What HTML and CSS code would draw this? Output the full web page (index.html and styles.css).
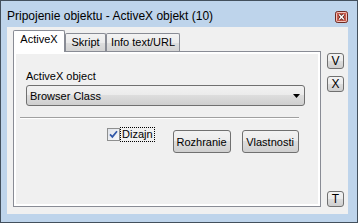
FILE: index.html
```html
<!DOCTYPE html>
<html>
<head>
<meta charset="utf-8">
<link rel="stylesheet" href="styles.css">
</head>
<body>
<div class="window">
  <div class="titlebar">
    <span class="title">Pripojenie objektu - ActiveX objekt (10)</span>
    <span class="close">
      <svg width="13" height="12" viewBox="0 0 13 12">
        <rect x="0.5" y="0.5" width="12" height="11" rx="2" fill="#c95a4c" stroke="#6d2b23"/>
        <rect x="1.5" y="1.5" width="10" height="9" rx="1" fill="none" stroke="#f2c4bc"/>
        <path d="M4.2 3.5 L8.8 8.5 M8.8 3.5 L4.2 8.5" stroke="#4a1d17" stroke-width="2.8"/>
        <path d="M4.2 3.5 L8.8 8.5 M8.8 3.5 L4.2 8.5" stroke="#ffffff" stroke-width="1.4"/>
      </svg>
    </span>
  </div>
  <div class="client">
    <div class="main">
      <div class="tabs">
        <div class="tab active">ActiveX</div>
        <div class="tab inactive t-skript">Skript</div>
        <div class="tab inactive t-info">Info text/URL</div>
      </div>
      <div class="panel">
        <div class="label">ActiveX object</div>
        <div class="combo">
          <span>Browser Class</span>
          <svg width="7" height="4" viewBox="0 0 7 4"><polygon points="0,0 7,0 3.5,4" fill="#000"/></svg>
        </div>
        <div class="sep"></div>
        <div class="row">
          <span class="check">
            <svg width="13" height="13" viewBox="0 0 13 13">
              <defs><linearGradient id="cg" x1="0" y1="0" x2="1" y2="1"><stop offset="0" stop-color="#dfe3ea"/><stop offset="1" stop-color="#f8f9fb"/></linearGradient></defs>
              <rect x="0.5" y="0.5" width="12" height="12" fill="url(#cg)" stroke="#8e8f8f"/>
              <path d="M3 6.3 L5.4 8.9 L10 3.3" fill="none" stroke="#3057a8" stroke-width="1.7"/>
            </svg>
          </span>
          <span class="cblabel">Dizajn</span>
          <span class="btn b-rozh">Rozhranie</span>
          <span class="btn b-vlast">Vlastnosti</span>
        </div>
      </div>
    </div>
    <div class="side">
      <span class="sbtn">V</span>
      <span class="sbtn s-x">X</span>
      <span class="sbtn s-t">T</span>
    </div>
  </div>
</div>
</body>
</html>
```
FILE: styles.css
```css
html, body {
  margin: 0;
  padding: 0;
}
body {
  font-family: "Liberation Sans", Arial, sans-serif;
  font-size: 11px;
  color: #000;
}
.window {
  width: 358px;
  height: 223px;
  box-sizing: border-box;
  border: 1px solid #43505d;
  background: #bed4eb;
  padding: 0 9px 8px 6px;
  display: flex;
  flex-direction: column;
}
.titlebar {
  height: 26px;
  flex: none;
  display: flex;
  justify-content: space-between;
  align-items: flex-start;
}
.title {
  font-size: 12px;
  line-height: 14px;
  margin-top: 8px;
}
.close {
  display: block;
  width: 13px;
  height: 12px;
  margin-top: 10px;
}
.close svg { display: block; }
.client {
  flex: 1;
  background: #f0f0f0;
  display: flex;
}
.main {
  padding: 3px 0 0 6px;
  display: flex;
  flex-direction: column;
}
.tabs {
  display: flex;
  align-items: flex-end;
  height: 22px;
}
.tab {
  box-sizing: border-box;
  border: 1px solid #898c95;
  border-bottom: none;
  text-align: center;
  line-height: 13px;
  border-radius: 2px 2px 0 0;
}
.tab.active {
  width: 52px;
  height: 22px;
  padding-top: 2px;
  background: #ffffff;
  position: relative;
  z-index: 1;
}
.tab.inactive {
  height: 19px;
  padding-top: 2px;
  background: linear-gradient(#f3f3f3, #ebebeb 50%, #dedede 50%, #d2d2d2);
}
.t-skript { width: 41px; }
.t-info { width: 74px; }
.panel {
  margin-top: -1px;
  width: 308px;
  height: 156px;
  box-sizing: border-box;
  border: 1px solid #898c95;
  background: #f0f0f0;
  box-shadow: inset 0 0 0 2px #ffffff;
  padding: 18px 0 0 12px;
  display: flex;
  flex-direction: column;
}
.label {
  line-height: 13px;
}
.combo {
  margin-top: 2px;
  width: 279px;
  height: 21px;
  box-sizing: border-box;
  border: 1px solid #707070;
  border-radius: 3px;
  background: linear-gradient(#f2f2f2, #ebebeb 50%, #dddddd 50%, #cfcfcf);
  display: flex;
  align-items: center;
  justify-content: space-between;
  padding: 0 4px 0 3px;
}
.combo svg { display: block; }
.sep {
  margin: 11px 0 0 -6px;
  width: 279px;
  height: 0;
  border-top: 1px solid #a0a0a0;
  border-bottom: 1px solid #ffffff;
}
.row {
  display: flex;
  align-items: flex-start;
  margin-top: 8px;
  padding-left: 81px;
}
.check {
  display: block;
  width: 13px;
  height: 13px;
  margin-top: 1px;
}
.check svg { display: block; }
.cblabel {
  margin-left: 0;
  height: 15px;
  box-sizing: border-box;
  border: 1px dotted #000;
  padding: 0 1px;
  line-height: 13px;
}
.btn {
  margin-top: 3px;
  height: 23px;
  box-sizing: border-box;
  border: 1px solid #707070;
  border-radius: 3px;
  background: linear-gradient(#f2f2f2, #ebebeb 50%, #dddddd 50%, #cfcfcf);
  display: flex;
  align-items: center;
  justify-content: center;
}
.b-rozh { width: 58px; margin-left: 18px; }
.b-vlast { width: 57px; margin-left: 11px; }
.side {
  display: flex;
  flex-direction: column;
  margin-left: 6px;
  padding: 26px 0 7px 0;
}
.sbtn {
  width: 17px;
  height: 16px;
  box-sizing: border-box;
  border: 1px solid #707070;
  border-radius: 3px;
  background: linear-gradient(#f2f2f2, #ebebeb 50%, #dddddd 50%, #cfcfcf);
  font-size: 12px;
  line-height: 14px;
  display: flex;
  align-items: center;
  justify-content: center;
}
.s-x { margin-top: 7px; }
.s-t { margin-top: auto; }
```
